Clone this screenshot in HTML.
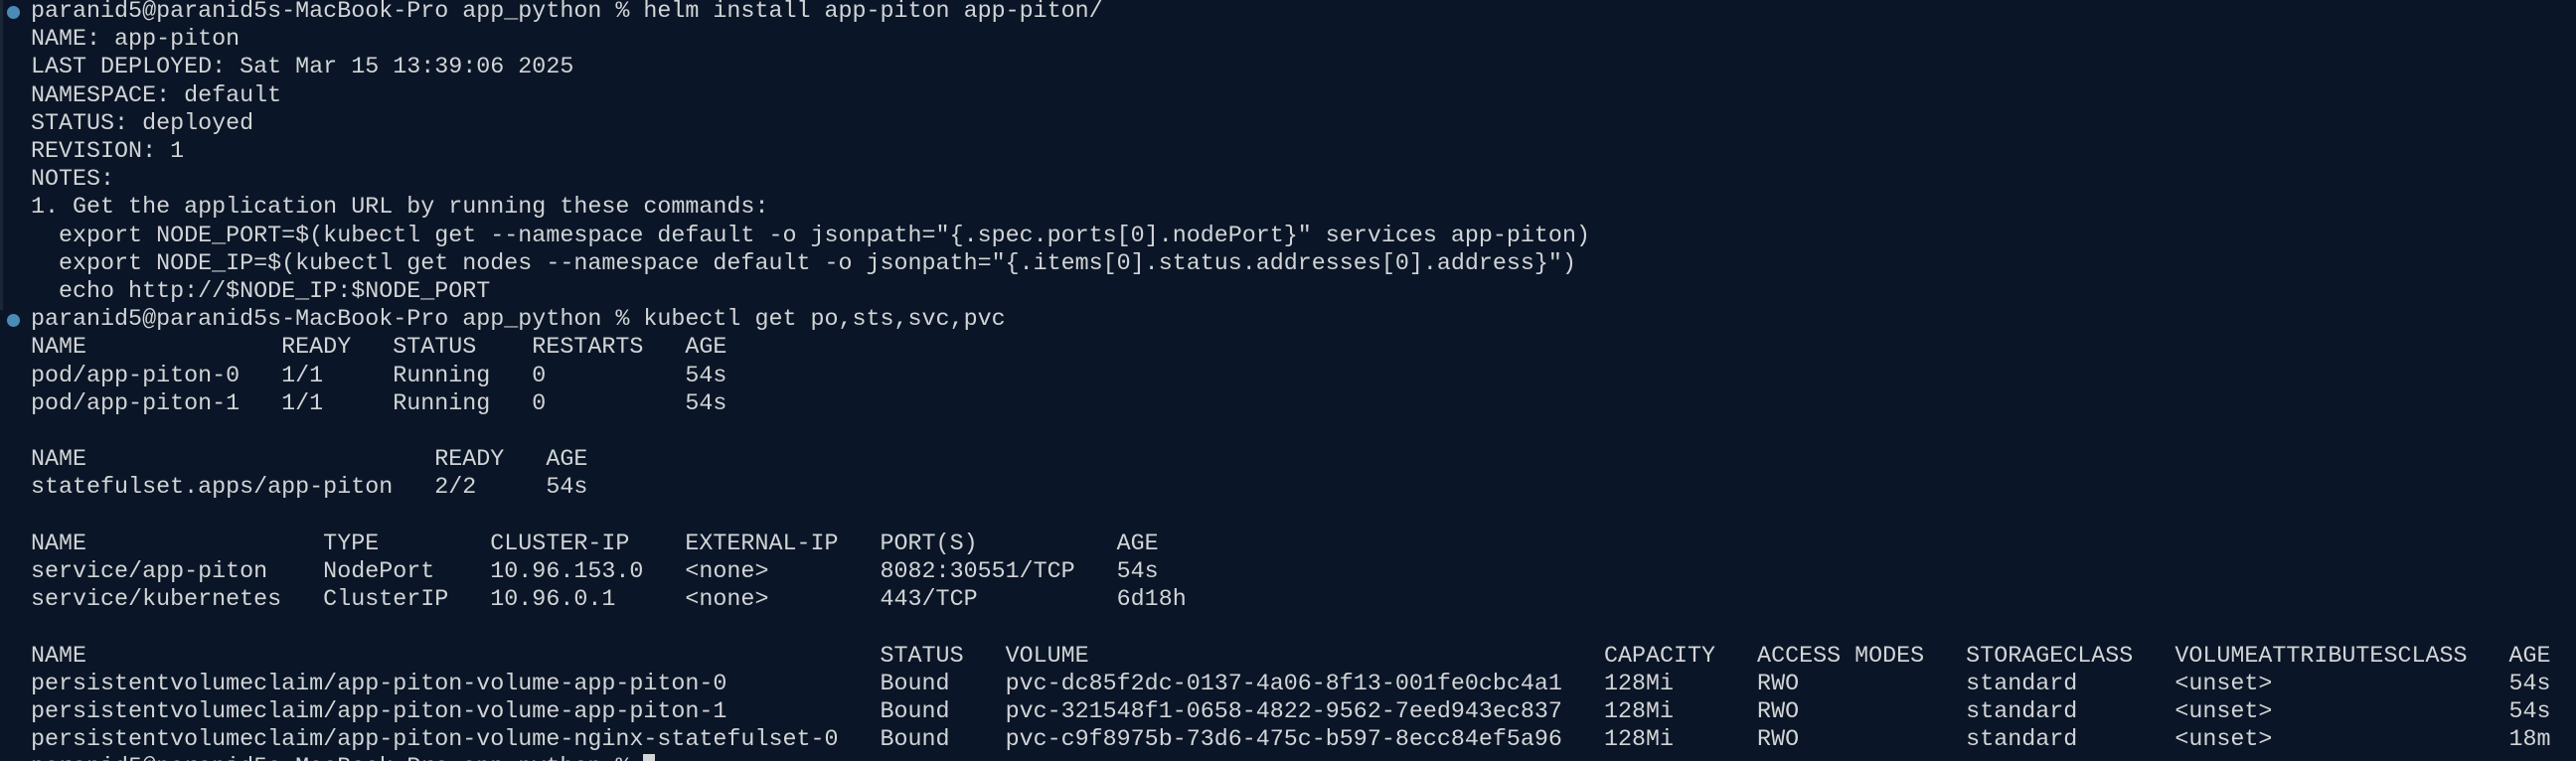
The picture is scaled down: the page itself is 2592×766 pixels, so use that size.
<!DOCTYPE html>
<html><head><meta charset="utf-8"><style>
html,body{margin:0;padding:0;width:2592px;height:766px;overflow:hidden;background:#0a1627;}
#wrap{position:relative;width:2592px;height:766px;overflow:hidden;background:#0a1627;}
.strip{position:absolute;left:0;top:0;width:3px;height:312px;background:#1b2637;}
pre{position:absolute;left:31px;top:-2px;margin:0;font-family:"Liberation Mono",monospace;font-size:23.35px;line-height:28.2px;color:#d2d4d6;white-space:pre;}
.dot{position:absolute;left:7px;width:13px;height:13px;border-radius:50%;background:#4a8bb8;}
.cur{display:inline-block;width:12px;height:24px;background:#d2d4d6;vertical-align:top;}
</style></head><body><div id="wrap">
<div class="strip"></div>
<div class="dot" style="top:6px"></div>
<div class="dot" style="top:316px"></div>
<div class="dot" style="top:766px"></div>
<pre>paranid5@paranid5s-MacBook-Pro app_python % helm install app-piton app-piton/
NAME: app-piton
LAST DEPLOYED: Sat Mar 15 13:39:06 2025
NAMESPACE: default
STATUS: deployed
REVISION: 1
NOTES:
1. Get the application URL by running these commands:
  export NODE_PORT=$(kubectl get --namespace default -o jsonpath="{.spec.ports[0].nodePort}" services app-piton)
  export NODE_IP=$(kubectl get nodes --namespace default -o jsonpath="{.items[0].status.addresses[0].address}")
  echo http://$NODE_IP:$NODE_PORT
paranid5@paranid5s-MacBook-Pro app_python % kubectl get po,sts,svc,pvc
NAME              READY   STATUS    RESTARTS   AGE
pod/app-piton-0   1/1     Running   0          54s
pod/app-piton-1   1/1     Running   0          54s

NAME                         READY   AGE
statefulset.apps/app-piton   2/2     54s

NAME                 TYPE        CLUSTER-IP    EXTERNAL-IP   PORT(S)          AGE
service/app-piton    NodePort    10.96.153.0   &lt;none&gt;        8082:30551/TCP   54s
service/kubernetes   ClusterIP   10.96.0.1     &lt;none&gt;        443/TCP          6d18h

NAME                                                         STATUS   VOLUME                                     CAPACITY   ACCESS MODES   STORAGECLASS   VOLUMEATTRIBUTESCLASS   AGE
persistentvolumeclaim/app-piton-volume-app-piton-0           Bound    pvc-dc85f2dc-0137-4a06-8f13-001fe0cbc4a1   128Mi      RWO            standard       &lt;unset&gt;                 54s
persistentvolumeclaim/app-piton-volume-app-piton-1           Bound    pvc-321548f1-0658-4822-9562-7eed943ec837   128Mi      RWO            standard       &lt;unset&gt;                 54s
persistentvolumeclaim/app-piton-volume-nginx-statefulset-0   Bound    pvc-c9f8975b-73d6-475c-b597-8ecc84ef5a96   128Mi      RWO            standard       &lt;unset&gt;                 18m
paranid5@paranid5s-MacBook-Pro app_python % <span class="cur"></span></pre>
</div></body></html>
